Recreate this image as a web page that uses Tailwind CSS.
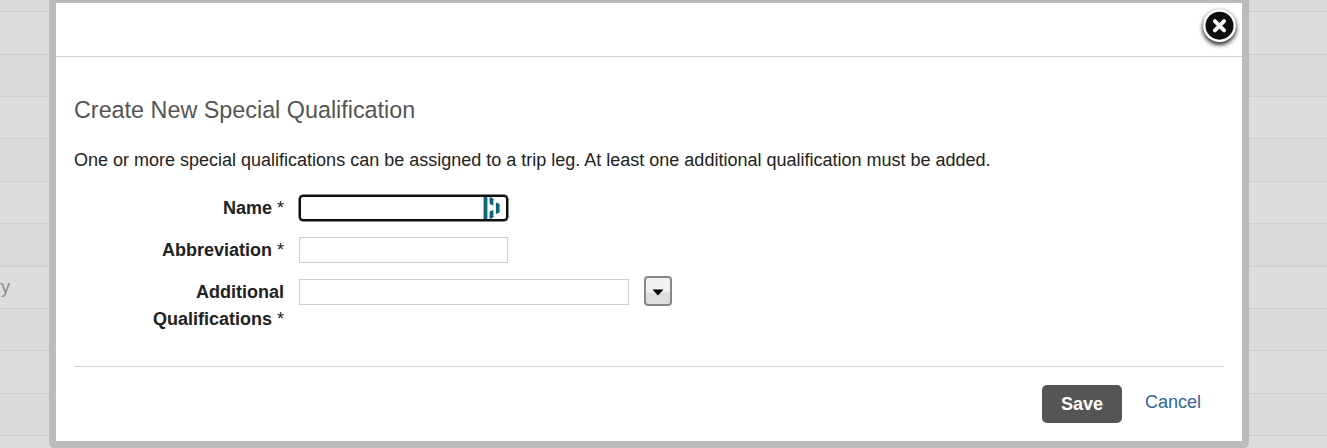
<!DOCTYPE html>
<html lang="en">
<head>
  <meta charset="UTF-8">
  <meta name="viewport" content="width=device-width, initial-scale=1.0">
  <title>Create New Special Qualification</title>
  <script src="https://cdn.jsdelivr.net/npm/@tailwindcss/browser@4"></script>
  <style>
    body {
      font-family: "Liberation Sans", Arial, Helvetica, sans-serif;
    }
  </style>
</head>
<body class="relative h-[448px] overflow-hidden bg-[#dddddd] text-[18px] text-[#222222]">
  <!-- Dimmed table behind the dialog -->
  <div class="flex flex-col">
    <div class="h-[12px] border-b border-[#cdcdcd] bg-[#dadada]"></div>
    <div class="h-[43px] border-b border-[#cdcdcd] bg-[#dddddd]"></div>
    <div class="h-[42px] border-b border-[#cdcdcd] bg-[#dadada]"></div>
    <div class="h-[42px] border-b border-[#cdcdcd] bg-[#dddddd]"></div>
    <div class="h-[43px] border-b border-[#cdcdcd] bg-[#dadada]"></div>
    <div class="h-[42px] border-b border-[#cdcdcd] bg-[#dddddd]"></div>
    <div class="h-[43px] border-b border-[#cdcdcd] bg-[#dadada]"></div>
    <div class="flex h-[42px] items-center border-b border-[#cdcdcd] bg-[#dddddd] text-[#8a8a8a]"><span class="-ml-[5px]">ry</span></div>
    <div class="h-[42px] border-b border-[#cdcdcd] bg-[#dadada]"></div>
    <div class="h-[43px] border-b border-[#cdcdcd] bg-[#dddddd]"></div>
    <div class="h-[42px] border-b border-[#cdcdcd] bg-[#dadada]"></div>
    <div class="h-[12px] bg-[#dddddd]"></div>
  </div>

  <!-- Dialog -->
  <div class="absolute top-0 left-[49px] h-[448px] w-[1200px] rounded-b-[5px] bg-[#bbbbbb] px-[7px] pt-[3px] pb-[7px]">
    <div class="flex h-full flex-col bg-white">
      <div class="flex h-[54px] justify-end border-b border-[#d2d2d2]">
        <button class="size-[44px]" aria-label="Close">
          <svg class="size-[44px] overflow-visible" viewBox="0 0 44 44">
            <defs>
              <filter id="shadow" x="-30%" y="-30%" width="160%" height="160%">
                <feGaussianBlur stdDeviation="2.2"/>
              </filter>
            </defs>
            <circle cx="21.5" cy="25" r="17" fill="#000" fill-opacity=".8" filter="url(#shadow)"/>
            <circle cx="21.5" cy="22.7" r="16.4" fill="#fff"/>
            <circle cx="21.5" cy="22.7" r="14" fill="#0d0d0d"/>
            <path d="M16.900 18.100l9.200 9.200M26.100 18.100l-9.200 9.200" stroke="#f4f4f4" stroke-width="4" stroke-linecap="round"/>
          </svg>
        </button>
      </div>

      <div class="px-[18px]">
        <h1 class="mt-[37px] text-[23.35px] leading-8 text-[#555555]">Create New Special Qualification</h1>
        <p class="mt-[21px] leading-[27px]">One or more special qualifications can be assigned to a trip leg. At least one additional qualification must be added.</p>

        <form>
          <div class="mt-[21px] flex h-[27px] items-start">
            <label class="w-[210px] text-right leading-[27px] font-bold">Name <span class="font-normal">*</span></label>
            <div class="ml-[15px] flex h-[26px] w-[209px] items-center justify-end rounded-[4px] border-2 border-[#101010] pr-[5px] shadow-[0_0_0_0.5px_#101010]">
              <svg class="h-[22px] w-[18px]" viewBox="0 0 18 22" fill="#0f6675">
                <path d="M.6 0h3.800v22H.6zM6.600 0l3.800 1.500v7L6.600 7zM6.600 14.500l3.800-1.500v7.500L6.600 22zM12.900 5.500l3.700 1.500v8.500L12.900 17z"/>
              </svg>
            </div>
          </div>
          <div class="mt-[15px] flex h-[27px] items-start">
            <label class="w-[210px] text-right leading-[27px] font-bold">Abbreviation <span class="font-normal">*</span></label>
            <input class="ml-[15px] h-[26px] w-[209px] border border-[#cccccc]" type="text">
          </div>
          <div class="mt-[15px] flex items-start">
            <label class="w-[210px] text-right leading-[27px] font-bold">Additional<br>Qualifications <span class="font-normal">*</span></label>
            <input class="ml-[15px] h-[26px] w-[330px] border border-[#cccccc]" type="text">
            <button class="-mt-[3px] ml-[15px] flex h-[30px] w-[28px] items-center justify-center rounded-[4px] border-2 border-[#85878a] bg-linear-to-b from-[#f1f1f1] from-50% to-[#dedede] to-60%" type="button" aria-label="Show qualifications">
              <svg class="mt-[2px] h-[7px] w-[12px]" viewBox="0 0 12 7"><path d="M.5.500h11L6 6.500z" fill="#000"/></svg>
            </button>
          </div>
        </form>

        <div class="mt-[33px] flex justify-end border-t border-[#d2d2d2] pt-[18px] pr-[23px]">
          <button class="h-[38px] w-[80px] rounded-[5px] bg-[#555555] font-bold text-white">Save</button>
          <a class="ml-[23px] leading-[34px] text-[#336699]" href="#">Cancel</a>
        </div>
      </div>
    </div>
  </div>
</body>
</html>
